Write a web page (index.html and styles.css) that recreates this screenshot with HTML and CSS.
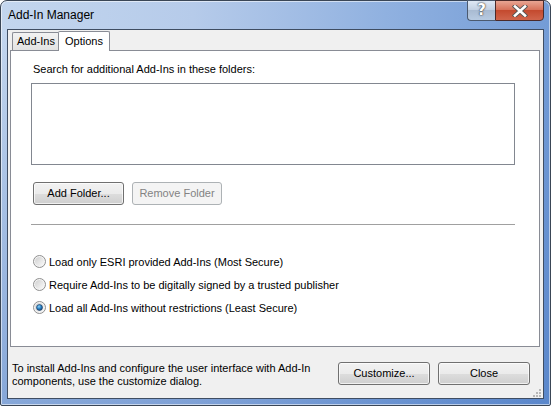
FILE: index.html
```html
<!DOCTYPE html>
<html>
<head>
<meta charset="utf-8">
<link rel="stylesheet" href="styles.css">
</head>
<body>
<div class="window">
  <div class="titlebar">
    <span class="title">Add-In Manager</span>
    <div class="caption-btns">
      <div class="cap-help">?</div>
      <div class="cap-close">
        <svg width="16" height="12" viewBox="0 0 16 12"><path d="M3 1.5 L13 10.5 M13 1.5 L3 10.5" stroke="#555" stroke-width="4.4" stroke-linecap="square"/><path d="M3 1.5 L13 10.5 M13 1.5 L3 10.5" stroke="#fff" stroke-width="2.6" stroke-linecap="square"/></svg>
      </div>
    </div>
  </div>
  <div class="client">
    <div class="tabs">
      <div class="tab">Add-Ins</div>
      <div class="tab tab-active">Options</div>
    </div>
    <div class="panel">
      <div class="label">Search for additional Add-Ins in these folders:</div>
      <div class="listbox"></div>
      <div class="btn-row">
        <div class="btn btn-add">Add Folder...</div>
        <div class="btn btn-disabled">Remove Folder</div>
      </div>
      <div class="separator"></div>
      <div class="radios">
        <div class="radio-row">
          <svg class="radio" width="13" height="13" viewBox="0 0 13 13"><defs><linearGradient id="rg" x1="0" y1="0" x2="1" y2="1"><stop offset="0" stop-color="#d0d0d0"/><stop offset="1" stop-color="#fafafa"/></linearGradient></defs><circle cx="6.5" cy="6.5" r="6" fill="#f4f4f4" stroke="#8f8f8f"/><circle cx="6.5" cy="6.5" r="4.5" fill="url(#rg)"/></svg>
          <span>Load only ESRI provided Add-Ins (Most Secure)</span>
        </div>
        <div class="radio-row">
          <svg class="radio" width="13" height="13" viewBox="0 0 13 13"><circle cx="6.5" cy="6.5" r="6" fill="#f4f4f4" stroke="#8f8f8f"/><circle cx="6.5" cy="6.5" r="4.5" fill="url(#rg)"/></svg>
          <span>Require Add-Ins to be digitally signed by a trusted publisher</span>
        </div>
        <div class="radio-row">
          <svg class="radio" width="13" height="13" viewBox="0 0 13 13"><defs><radialGradient id="dot" cx="0.4" cy="0.35" r="0.7"><stop offset="0" stop-color="#8fd2f7"/><stop offset="0.5" stop-color="#2b83c6"/><stop offset="1" stop-color="#123f73"/></radialGradient></defs><circle cx="6.5" cy="6.5" r="6" fill="#f4f4f4" stroke="#8f8f8f"/><circle cx="6.5" cy="6.5" r="4.5" fill="url(#rg)"/><circle cx="6.5" cy="6.5" r="3" fill="url(#dot)" stroke="#1a3a60" stroke-width="0.6"/></svg>
          <span>Load all Add-Ins without restrictions (Least Secure)</span>
        </div>
      </div>
    </div>
    <div class="footer">
      <div class="footer-text">To install Add-Ins and configure the user interface with Add-In<br>components, use the customize dialog.</div>
      <div class="footer-btns">
        <div class="btn btn-wide">Customize...</div>
        <div class="btn btn-wide">Close</div>
      </div>
      <svg class="grip" width="8" height="8" viewBox="0 0 8 8"><g fill="#b8b8b8"><rect x="6" y="0" width="2" height="2"/><rect x="3" y="3" width="2" height="2"/><rect x="6" y="3" width="2" height="2"/><rect x="0" y="6" width="2" height="2"/><rect x="3" y="6" width="2" height="2"/><rect x="6" y="6" width="2" height="2"/></g></svg>
    </div>
  </div>
</div>
</body>
</html>
```

FILE: styles.css
```css
html, body {
  margin: 0;
  padding: 0;
  width: 551px;
  height: 406px;
  overflow: hidden;
  background: #ffffff;
}
body {
  font-family: "Liberation Sans", Arial, sans-serif;
  font-size: 11px;
  color: #000;
}
.window {
  box-sizing: border-box;
  width: 551px;
  height: 406px;
  border: 1px solid #3a4656;
  border-radius: 7px 7px 2px 2px;
  background:
    linear-gradient(to bottom, rgba(60,110,190,0) 0px, rgba(60,110,190,0) 28px, rgba(60,110,190,0.45) 100%),
    linear-gradient(to right, #c3d6ee 0%, #b6cbea 35%, #90b1e0 70%, #749cd6 100%);
  display: flex;
  flex-direction: column;
  position: relative;
  box-shadow: inset 0 0 0 1px rgba(255,255,255,0.55);
}
.titlebar {
  height: 28px;
  position: relative;
  flex: none;
}
.title {
  position: absolute;
  left: 7px;
  top: 7px;
  font-size: 12px;
  line-height: 15px;
  color: #000;
}
.caption-btns {
  position: absolute;
  right: 6px;
  top: -1px;
  display: flex;
}
.cap-help {
  width: 27px;
  height: 19px;
  border: 1px solid #4b5a70;
  border-right: none;
  border-radius: 0 0 0 4px;
  background: linear-gradient(to bottom, #dfe8f4 0%, #c3d1e3 45%, #a9bbd2 50%, #b8cbe2 100%);
  color: #fff;
  font-weight: bold;
  font-size: 15px;
  line-height: 19px;
  text-align: center;
  text-shadow: 0 0 2px #333, 0 0 1px #333;
  font-family: "DejaVu Sans", sans-serif;
}
.cap-close {
  width: 47px;
  height: 19px;
  border: 1px solid #4b2a2a;
  border-radius: 0 0 4px 0;
  background: linear-gradient(to bottom, #e8a593 0%, #d7735c 45%, #c44a2f 50%, #d0654c 100%);
  display: flex;
  align-items: center;
  justify-content: center;
}
.client {
  flex: 1;
  margin: 0 6px 6px 6px;
  border: 1px solid #3f4d62;
  background: #f0f0f0;
  display: flex;
  flex-direction: column;
  position: relative;
}
.tabs {
  display: flex;
  height: 20px;
  padding-left: 4px;
  align-items: flex-end;
  flex: none;
}
.tab {
  box-sizing: border-box;
  height: 18px;
  width: 46px;
  border: 1px solid #898c95;
  border-bottom: none;
  border-right: none;
  background: linear-gradient(to bottom, #f2f2f2, #e3e3e3);
  padding-left: 4px;
  line-height: 16px;
  border-radius: 2px 0 0 0;
}
.tab-active {
  height: 20px;
  width: 52px;
  border-right: 1px solid #898c95;
  background: #fff;
  padding-left: 6px;
  line-height: 18px;
  margin-bottom: -1px;
  position: relative;
  z-index: 1;
  border-radius: 2px 2px 0 0;
}
.panel {
  box-sizing: border-box;
  margin-left: 2px;
  width: 530px;
  height: 297px;
  border: 1px solid #898c95;
  background: #fff;
  flex: none;
  padding-top: 12px;
}
.label {
  margin-left: 22px;
  line-height: 13px;
}
.listbox {
  box-sizing: border-box;
  margin: 7px 0 0 20px;
  width: 484px;
  height: 82px;
  border: 1px solid #828790;
  background: #fff;
}
.btn-row {
  display: flex;
  gap: 8px;
  margin: 17px 0 0 22px;
}
.btn {
  box-sizing: border-box;
  height: 23px;
  border: 1px solid #707070;
  border-radius: 3px;
  background: linear-gradient(to bottom, #f2f2f2 0%, #ebebeb 50%, #dddddd 51%, #cfcfcf 100%);
  box-shadow: inset 0 0 0 1px rgba(255,255,255,0.7);
  text-align: center;
  line-height: 21px;
  color: #000;
}
.btn-add { width: 91px; }
.btn-disabled {
  width: 90px;
  border-color: #adb2b5;
  background: #f4f4f4;
  color: #838383;
  box-shadow: none;
}
.btn-wide { width: 92px; }
.separator {
  margin: 19px 0 0 20px;
  width: 484px;
  height: 1px;
  background: #a0a0a0;
}
.radios {
  margin: 30px 0 0 22px;
  display: flex;
  flex-direction: column;
  gap: 10px;
}
.radio-row {
  display: flex;
  align-items: center;
  height: 13px;
}
.radio {
  flex: none;
  margin-right: 3px;
}
.footer {
  flex: 1;
  display: flex;
  align-items: flex-start;
  justify-content: space-between;
  padding: 15px 13px 0 4px;
  position: relative;
}
.footer-text {
  line-height: 13px;
}
.footer-btns {
  display: flex;
  gap: 8px;
}
.grip {
  position: absolute;
  right: 2px;
  bottom: 1px;
}
```
